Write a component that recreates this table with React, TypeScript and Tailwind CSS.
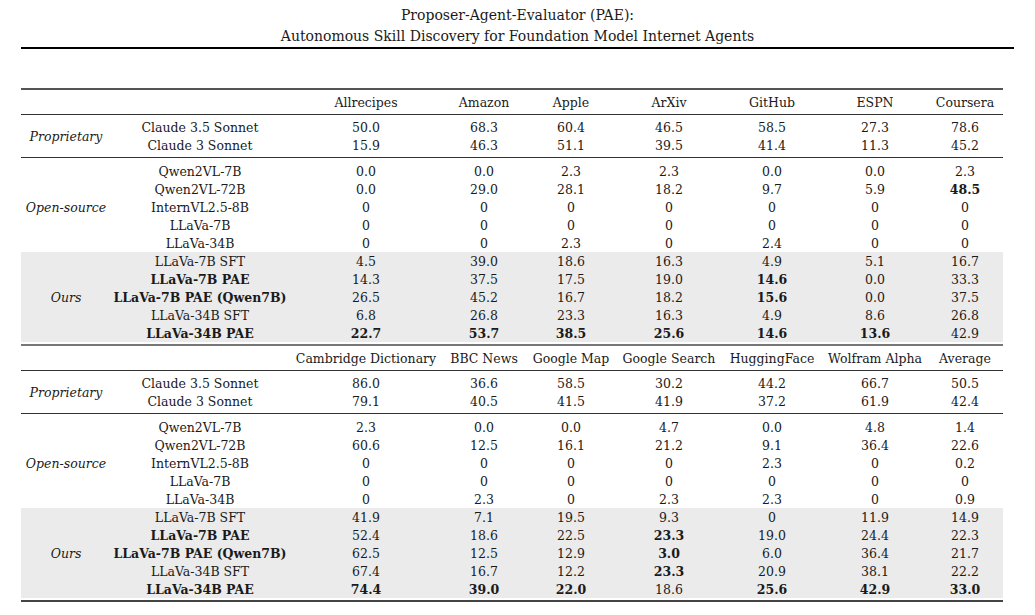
import React from "react";

type Row = { name: string; bold?: boolean; vals: string[] };
type Group = { label: string; rows: Row[]; shaded?: boolean };

const COLS = "grid grid-cols-[178px_154px_82px_92px_104px_102px_104px_76px]";

const half1: { header: string[]; groups: Group[] } = {
  header: ["Allrecipes", "Amazon", "Apple", "ArXiv", "GitHub", "ESPN", "Coursera"],
  groups: [
    {
      label: "Proprietary",
      rows: [
        { name: "Claude 3.5 Sonnet", vals: ["50.0", "68.3", "60.4", "46.5", "58.5", "27.3", "78.6"] },
        { name: "Claude 3 Sonnet", vals: ["15.9", "46.3", "51.1", "39.5", "41.4", "11.3", "45.2"] },
      ],
    },
    {
      label: "Open-source",
      rows: [
        { name: "Qwen2VL-7B", vals: ["0.0", "0.0", "2.3", "2.3", "0.0", "0.0", "2.3"] },
        { name: "Qwen2VL-72B", vals: ["0.0", "29.0", "28.1", "18.2", "9.7", "5.9", "*48.5"] },
        { name: "InternVL2.5-8B", vals: ["0", "0", "0", "0", "0", "0", "0"] },
        { name: "LLaVa-7B", vals: ["0", "0", "0", "0", "0", "0", "0"] },
        { name: "LLaVa-34B", vals: ["0", "0", "2.3", "0", "2.4", "0", "0"] },
      ],
    },
    {
      label: "Ours",
      shaded: true,
      rows: [
        { name: "LLaVa-7B SFT", vals: ["4.5", "39.0", "18.6", "16.3", "4.9", "5.1", "16.7"] },
        { name: "LLaVa-7B PAE", bold: true, vals: ["14.3", "37.5", "17.5", "19.0", "*14.6", "0.0", "33.3"] },
        { name: "LLaVa-7B PAE (Qwen7B)", bold: true, vals: ["26.5", "45.2", "16.7", "18.2", "*15.6", "0.0", "37.5"] },
        { name: "LLaVa-34B SFT", vals: ["6.8", "26.8", "23.3", "16.3", "4.9", "8.6", "26.8"] },
        { name: "LLaVa-34B PAE", bold: true, vals: ["*22.7", "*53.7", "*38.5", "*25.6", "*14.6", "*13.6", "42.9"] },
      ],
    },
  ],
};

const half2: { header: string[]; groups: Group[] } = {
  header: ["Cambridge Dictionary", "BBC News", "Google Map", "Google Search", "HuggingFace", "Wolfram Alpha", "Average"],
  groups: [
    {
      label: "Proprietary",
      rows: [
        { name: "Claude 3.5 Sonnet", vals: ["86.0", "36.6", "58.5", "30.2", "44.2", "66.7", "50.5"] },
        { name: "Claude 3 Sonnet", vals: ["79.1", "40.5", "41.5", "41.9", "37.2", "61.9", "42.4"] },
      ],
    },
    {
      label: "Open-source",
      rows: [
        { name: "Qwen2VL-7B", vals: ["2.3", "0.0", "0.0", "4.7", "0.0", "4.8", "1.4"] },
        { name: "Qwen2VL-72B", vals: ["60.6", "12.5", "16.1", "21.2", "9.1", "36.4", "22.6"] },
        { name: "InternVL2.5-8B", vals: ["0", "0", "0", "0", "2.3", "0", "0.2"] },
        { name: "LLaVa-7B", vals: ["0", "0", "0", "0", "0", "0", "0"] },
        { name: "LLaVa-34B", vals: ["0", "2.3", "0", "2.3", "2.3", "0", "0.9"] },
      ],
    },
    {
      label: "Ours",
      shaded: true,
      rows: [
        { name: "LLaVa-7B SFT", vals: ["41.9", "7.1", "19.5", "9.3", "0", "11.9", "14.9"] },
        { name: "LLaVa-7B PAE", bold: true, vals: ["52.4", "18.6", "22.5", "*23.3", "19.0", "24.4", "22.3"] },
        { name: "LLaVa-7B PAE (Qwen7B)", bold: true, vals: ["62.5", "12.5", "12.9", "*3.0", "6.0", "36.4", "21.7"] },
        { name: "LLaVa-34B SFT", vals: ["67.4", "16.7", "12.2", "*23.3", "20.9", "38.1", "22.2"] },
        { name: "LLaVa-34B PAE", bold: true, vals: ["*74.4", "*39.0", "*22.0", "18.6", "*25.6", "*42.9", "*33.0"] },
      ],
    },
  ],
};

function GroupBlock({ g }: { g: Group }) {
  return (
    <div className={"flex " + (g.shaded ? "bg-[#ebebeb]" : "")}>
      <div className="w-[90px] flex items-center justify-center italic pt-[2px]">{g.label}</div>
      <div className="flex flex-col">
        {g.rows.map((r) => (
          <div
            key={r.name}
            className={COLS + " h-[18px] pt-[2px] leading-[16px] items-center text-center whitespace-nowrap"}
          >
            <div className={r.bold ? "font-bold" : ""}>{r.name}</div>
            {r.vals.map((v, i) => (
              <div key={i} className={v.startsWith("*") ? "font-bold" : ""}>
                {v.replace("*", "")}
              </div>
            ))}
          </div>
        ))}
      </div>
    </div>
  );
}

function Half({ data }: { data: typeof half1 }) {
  const [prop, open, ours] = data.groups;
  return (
    <div className="flex flex-col">
      <div className="flex h-[24px] pt-[1px] items-center text-center whitespace-nowrap">
        <div className="w-[90px]" />
        <div className={COLS}>
          <div />
          {data.header.map((h) => (
            <div key={h}>{h}</div>
          ))}
        </div>
      </div>
      <div className="h-px bg-[#333]" />
      <div className="pt-[3px] pb-[3px]">
        <GroupBlock g={prop} />
      </div>
      <div className="h-px bg-[#333]" />
      <div className="pt-[4px]">
        <GroupBlock g={open} />
        <GroupBlock g={ours} />
      </div>
    </div>
  );
}

export default function App() {
  return (
    <div
      className="w-[1035px] h-[615px] bg-white text-[#1a1a1a] text-[12.5px] leading-[18px]"
      style={{ fontFamily: '"DejaVu Serif", "Liberation Serif", serif' }}
    >
      <div className="pt-[5px] text-center text-[14px] leading-[21px]">
        <div>Proposer-Agent-Evaluator (PAE):</div>
        <div>Autonomous Skill Discovery for Foundation Model Internet Agents</div>
      </div>
      <div className="mx-[21px] h-[2px] bg-black" />
      <div className="mx-[21px] mt-[39px] w-[982px]">
        <div className="h-[2px] bg-[#555]" />
        <Half data={half1} />
        <div className="mt-[2px] h-[2px] bg-[#777]" />
        <Half data={half2} />
        <div className="mt-[2px] h-[2px] bg-[#444]" />
      </div>
    </div>
  );
}
